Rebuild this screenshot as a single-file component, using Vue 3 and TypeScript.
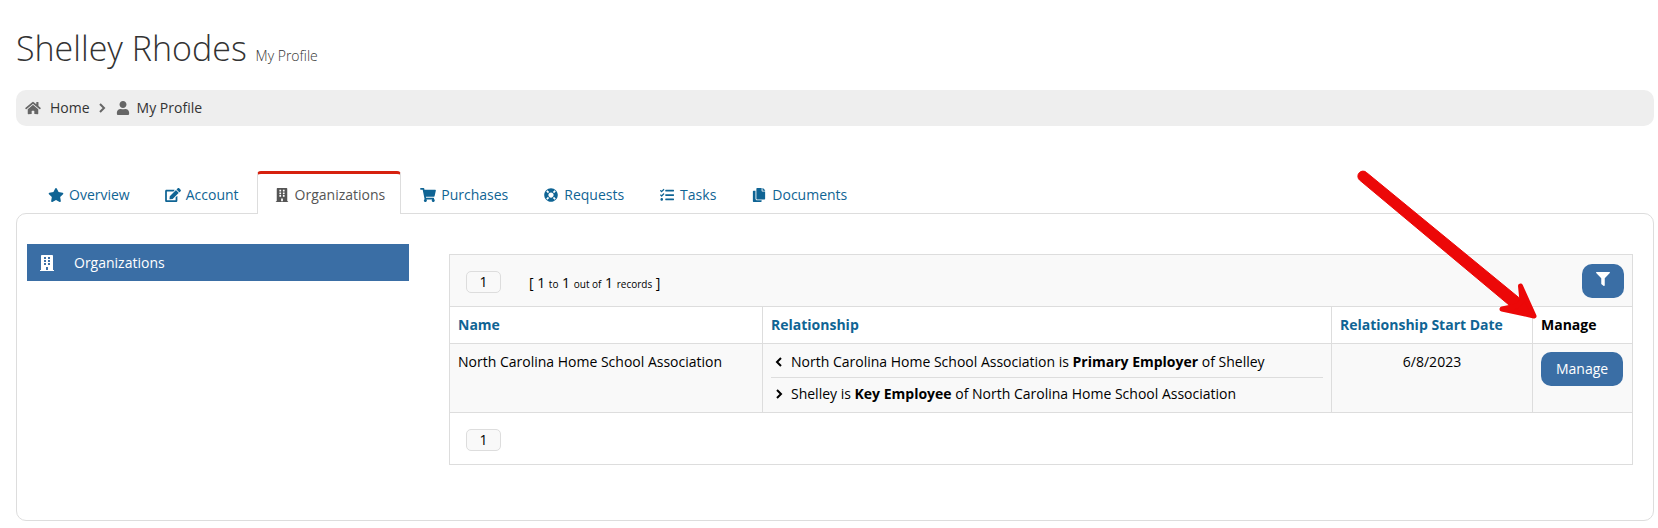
<script setup lang="ts">
import { ref } from 'vue'

interface Icon {
  viewBox: string
  path: string
}

interface Tab {
  label: string
  icon: Icon
}

const icons: Record<string, Icon> = {
  home: {
    viewBox: '0 0 576 512',
    path: 'M280.37 148.26L96 300.11V464a16 16 0 0 0 16 16l112.06-.29a16 16 0 0 0 15.92-16V368a16 16 0 0 1 16-16h64a16 16 0 0 1 16 16v95.64a16 16 0 0 0 16 16.05L464 480a16 16 0 0 0 16-16V300L295.67 148.26a12.19 12.19 0 0 0-15.3 0zM571.6 251.47L488 182.56V44.05a12 12 0 0 0-12-12h-56a12 12 0 0 0-12 12v72.61L318.47 43a48 48 0 0 0-61 0L4.34 251.47a12 12 0 0 0-1.6 16.9l25.5 31A12 12 0 0 0 45.15 301l235.22-193.74a12.19 12.19 0 0 1 15.3 0L530.9 301a12 12 0 0 0 16.9-1.6l25.5-31a12 12 0 0 0-1.7-16.93z',
  },
  user: {
    viewBox: '0 0 448 512',
    path: 'M224 256c70.7 0 128-57.3 128-128S294.7 0 224 0 96 57.3 96 128s57.3 128 128 128zm89.6 32h-16.7c-22.2 10.2-46.9 16-72.9 16s-50.6-5.8-72.9-16h-16.7C60.2 288 0 348.2 0 422.4V464c0 26.5 21.5 48 48 48h352c26.5 0 48-21.5 48-48v-41.6c0-74.2-60.2-134.4-134.4-134.4z',
  },
  star: {
    viewBox: '0 0 576 512',
    path: 'M259.3 17.8L194 150.2 47.9 171.5c-26.2 3.8-36.7 36.1-17.7 54.6l105.7 103-25 145.5c-4.5 26.3 23.2 46 46.4 33.7L288 439.6l130.7 68.7c23.2 12.2 50.9-7.4 46.4-33.7l-25-145.5 105.7-103c19-18.5 8.5-50.8-17.7-54.6L382 150.2 316.7 17.8c-11.7-23.6-45.6-23.9-57.4 0z',
  },
  edit: {
    viewBox: '0 0 576 512',
    path: 'M402.6 83.2l90.2 90.2c3.8 3.8 3.8 10 0 13.8L274.4 405.6l-92.8 10.3c-12.4 1.4-22.9-9.1-21.5-21.5l10.3-92.8L388.8 83.2c3.8-3.8 10-3.8 13.8 0zm162-22.9l-48.8-48.8c-15.2-15.2-39.9-15.2-55.2 0l-35.4 35.4c-3.8 3.8-3.8 10 0 13.8l90.2 90.2c3.8 3.8 10 3.8 13.8 0l35.4-35.4c15.2-15.3 15.2-40 0-55.2zM384 346.2V448H64V128h229.8c3.2 0 6.2-1.3 8.5-3.5l40-40c7.6-7.6 2.2-20.5-8.5-20.5H48C21.5 64 0 85.5 0 112v352c0 26.5 21.5 48 48 48h352c26.5 0 48-21.5 48-48V306.2c0-10.7-12.9-16-20.5-8.5l-40 40c-2.2 2.3-3.5 5.3-3.5 8.5z',
  },
  building: {
    viewBox: '0 0 448 512',
    path: 'M436 480h-20V24c0-13.255-10.745-24-24-24H56C42.745 0 32 10.745 32 24v456H12c-6.627 0-12 5.373-12 12v20h448v-20c0-6.627-5.373-12-12-12zM128 76c0-6.627 5.373-12 12-12h40c6.627 0 12 5.373 12 12v40c0 6.627-5.373 12-12 12h-40c-6.627 0-12-5.373-12-12V76zm0 96c0-6.627 5.373-12 12-12h40c6.627 0 12 5.373 12 12v40c0 6.627-5.373 12-12 12h-40c-6.627 0-12-5.373-12-12v-40zm52 148h-40c-6.627 0-12-5.373-12-12v-40c0-6.627 5.373-12 12-12h40c6.627 0 12 5.373 12 12v40c0 6.627-5.373 12-12 12zm76 160h-64v-84c0-6.627 5.373-12 12-12h40c6.627 0 12 5.373 12 12v84zm64-172c0 6.627-5.373 12-12 12h-40c-6.627 0-12-5.373-12-12v-40c0-6.627 5.373-12 12-12h40c6.627 0 12 5.373 12 12v40zm0-96c0 6.627-5.373 12-12 12h-40c-6.627 0-12-5.373-12-12v-40c0-6.627 5.373-12 12-12h40c6.627 0 12 5.373 12 12v40zm0-96c0 6.627-5.373 12-12 12h-40c-6.627 0-12-5.373-12-12V76c0-6.627 5.373-12 12-12h40c6.627 0 12 5.373 12 12v40z',
  },
  cart: {
    viewBox: '0 0 576 512',
    path: 'M528.12 301.319l47.273-208C578.806 78.301 567.391 64 551.99 64H159.208l-9.166-44.81C147.758 8.021 137.93 0 126.529 0H24C10.745 0 0 10.745 0 24v16c0 13.255 10.745 24 24 24h69.883l70.248 343.435C147.325 417.1 136 435.222 136 456c0 30.928 25.072 56 56 56s56-25.072 56-56c0-15.674-6.447-29.835-16.824-40h209.647C430.447 426.165 424 440.326 424 456c0 30.928 25.072 56 56 56s56-25.072 56-56c0-22.172-12.888-41.332-31.579-50.405l5.517-24.276c3.413-15.018-8.002-29.319-23.403-29.319H218.117l-6.545-32h293.145c11.206 0 20.92-7.754 23.403-18.681z',
  },
  ring: {
    viewBox: '0 0 512 512',
    path: 'M256 8C119.033 8 8 119.033 8 256s111.033 248 248 248 248-111.033 248-248S392.967 8 256 8zm173.696 119.559l-63.399 63.399c-10.987-18.559-26.67-34.252-45.255-45.255l63.399-63.399a218.396 218.396 0 0 1 45.255 45.255zM256 352c-53.019 0-96-42.981-96-96s42.981-96 96-96 96 42.981 96 96-42.981 96-96 96zM127.559 82.304l63.399 63.399c-18.559 10.987-34.252 26.67-45.255 45.255l-63.399-63.399a218.372 218.372 0 0 1 45.255-45.255zM82.304 384.441l63.399-63.399c10.987 18.559 26.67 34.252 45.255 45.255l-63.399 63.399a218.396 218.396 0 0 1-45.255-45.255zm302.137 45.255l-63.399-63.399c18.559-10.987 34.252-26.67 45.255-45.255l63.399 63.399a218.403 218.403 0 0 1-45.255 45.255z',
  },
  tasks: {
    viewBox: '0 0 512 512',
    path: 'M139.61 35.5a12 12 0 0 0-17 0L58.93 98.81l-22.7-22.12a12 12 0 0 0-17 0L3.53 92.41a12 12 0 0 0 0 17l47.59 47.4a12.78 12.78 0 0 0 17.61 0l15.59-15.62L156.52 69a12.09 12.09 0 0 0 .09-17zm0 159.19a12 12 0 0 0-17 0l-63.68 63.72-22.7-22.1a12 12 0 0 0-17 0L3.53 252a12 12 0 0 0 0 17L51 316.5a12.77 12.77 0 0 0 17.6 0l15.7-15.69 72.2-72.22a12 12 0 0 0 .09-16.9zM64 368c-26.49 0-48.59 21.5-48.59 48S37.53 464 64 464a48 48 0 0 0 0-96zm432 16H208a16 16 0 0 0-16 16v32a16 16 0 0 0 16 16h288a16 16 0 0 0 16-16v-32a16 16 0 0 0-16-16zm0-320H208a16 16 0 0 0-16 16v32a16 16 0 0 0 16 16h288a16 16 0 0 0 16-16V80a16 16 0 0 0-16-16zm0 160H208a16 16 0 0 0-16 16v32a16 16 0 0 0 16 16h288a16 16 0 0 0 16-16v-32a16 16 0 0 0-16-16z',
  },
  copy: {
    viewBox: '0 0 448 512',
    path: 'M320 448v40c0 13.255-10.745 24-24 24H24c-13.255 0-24-10.745-24-24V120c0-13.255 10.745-24 24-24h72v296c0 30.879 25.121 56 56 56h168zm0-344V0H152c-13.255 0-24 10.745-24 24v368c0 13.255 10.745 24 24 24h272c13.255 0 24-10.745 24-24V128H344c-13.2 0-24-10.8-24-24zm120.971-31.029L375.029 7.029A24 24 0 0 0 358.059 0H352v96h96v-6.059a24 24 0 0 0-7.029-16.97z',
  },
  filter: {
    viewBox: '0 0 512 512',
    path: 'M487.976 0H24.028C2.71 0-8.047 25.866 7.058 40.971L192 225.941V432c0 7.831 3.821 15.17 10.237 19.662l80 55.98C298.02 518.69 320 507.493 320 487.98V225.941l184.947-184.97C520.021 25.896 509.338 0 487.976 0z',
  },
}

const tabs: Tab[] = [
  { label: 'Overview', icon: icons.star },
  { label: 'Account', icon: icons.edit },
  { label: 'Organizations', icon: icons.building },
  { label: 'Purchases', icon: icons.cart },
  { label: 'Requests', icon: icons.ring },
  { label: 'Tasks', icon: icons.tasks },
  { label: 'Documents', icon: icons.copy },
]

const active = ref('Organizations')
</script>

<template>
  <div class="page">
    <h1 class="title">Shelley Rhodes <small>My Profile</small></h1>

    <nav class="breadcrumb" aria-label="Breadcrumb">
      <a href="#home"><svg class="icon" :viewBox="icons.home.viewBox"><path :d="icons.home.path" /></svg>Home</a>
      <svg class="chevron" viewBox="0 0 8 10"><path d="M2 1l4 4-4 4" /></svg>
      <a href="#profile" class="profile"><svg class="icon" :viewBox="icons.user.viewBox"><path :d="icons.user.path" /></svg>My Profile</a>
    </nav>

    <nav class="tabs" aria-label="Profile sections">
      <a
        v-for="tab in tabs"
        :key="tab.label"
        :href="'#' + tab.label.toLowerCase()"
        :class="['tab', { active: tab.label === active }]"
        @click.prevent="active = tab.label"
      ><svg class="icon" :viewBox="tab.icon.viewBox"><path :d="tab.icon.path" /></svg>{{ tab.label }}</a>
    </nav>

    <main class="panel">
      <aside>
        <a href="#organizations" class="side-link"><svg class="icon" :viewBox="icons.building.viewBox"><path :d="icons.building.path" /></svg>Organizations</a>
      </aside>

      <section class="grid">
        <div class="bar shaded">
          <button type="button" class="page-number">1</button>
          <span class="records">[ 1 <small>to</small> 1 <small>out of</small> 1 <small>records</small> ]</span>
          <button type="button" class="primary filter" aria-label="Filter">
            <svg class="icon" :viewBox="icons.filter.viewBox"><path :d="icons.filter.path" /></svg>
          </button>
        </div>
        <table>
          <colgroup>
            <col class="col-name" />
            <col />
            <col class="col-date" />
            <col class="col-manage" />
          </colgroup>
          <thead>
            <tr>
              <th><a href="#name">Name</a></th>
              <th><a href="#relationship">Relationship</a></th>
              <th><a href="#start">Relationship Start Date</a></th>
              <th>Manage</th>
            </tr>
          </thead>
          <tbody>
            <tr>
              <td>North Carolina Home School Association</td>
              <td>
                <div class="relation">
                  <svg class="chevron" viewBox="0 0 8 10"><path d="M6 1l-4 4 4 4" /></svg>
                  <span>North Carolina Home School Association is <b>Primary Employer</b> of Shelley</span>
                </div>
                <div class="relation">
                  <svg class="chevron" viewBox="0 0 8 10"><path d="M2 1l4 4-4 4" /></svg>
                  <span>Shelley is <b>Key Employee</b> of North Carolina Home School Association</span>
                </div>
              </td>
              <td class="date">6/8/2023</td>
              <td><button type="button" class="primary">Manage</button></td>
            </tr>
          </tbody>
        </table>
        <div class="bar footer">
          <button type="button" class="page-number">1</button>
        </div>
      </section>
    </main>

    <svg class="arrow" viewBox="0 0 184 152" aria-hidden="true">
      <path d="M11.5 5.5L168 134L160 143L4.500 13A5 5 0 0 1 11.500 5.500Z" stroke-width="1" />
      <path d="M165.500 119L179 149L147 142L162 139L167 134Z" stroke-width="5" />
    </svg>
  </div>
</template>

<style>
body {
  margin: 0;
  background: #fff;
}
</style>

<style scoped>
.page {
  position: relative;
  padding: 24px 4px 7px 16px;
  color: #000;
  font: 14px/20px "Open Sans", "Noto Sans", sans-serif;
}

.page *,
.page {
  box-sizing: border-box;
}

a {
  color: #0f6494;
  text-decoration: none;
}

button {
  font: inherit;
  cursor: pointer;
}

.icon {
  flex: none;
  width: 18px;
  height: 14px;
  fill: currentColor;
}

.chevron {
  flex: none;
  width: 8px;
  height: 10px;
  fill: none;
  stroke: currentColor;
  stroke-width: 2;
}

.title {
  margin: 0 0 18px;
  color: #333;
  font-size: 34px;
  font-weight: 300;
  line-height: 48px;
}

.title small {
  font-size: 14px;
  line-height: 20px;
}

.breadcrumb {
  display: flex;
  align-items: center;
  height: 36px;
  padding: 0 8px;
  border-radius: 10px;
  background: #eee;
}

.breadcrumb a {
  display: flex;
  align-items: center;
  gap: 8px;
  color: #333;
}

.breadcrumb .profile {
  gap: 5px;
}

.breadcrumb .icon,
.breadcrumb .chevron {
  color: #666;
}

.breadcrumb .chevron {
  margin: 0 8px;
}

.tabs {
  display: flex;
  gap: 2px;
  margin-top: 45px;
  padding-left: 15px;
}

.tab {
  display: flex;
  align-items: center;
  gap: 4px;
  height: 43px;
  margin-bottom: -1px;
  padding: 1px 15px 0;
  border: 1px solid transparent;
  border-top-width: 3px;
  border-bottom: 0;
  border-radius: 4px 4px 0 0;
}

.tab.active {
  z-index: 1;
  border-color: #d6210f #ddd #ddd;
  background: #fff;
  color: #555;
}

.panel {
  display: grid;
  grid-template-columns: minmax(0, 382fr) minmax(0, 1184fr);
  gap: 40px;
  padding: 30px 20px 55px 10px;
  border: 1px solid #ddd;
  border-radius: 10px;
}

.side-link {
  display: flex;
  align-items: center;
  gap: 18px;
  height: 37px;
  padding: 0 11px;
  background: #3a6ea5;
  color: #fff;
}

.side-link .icon {
  height: 16px;
}

.grid {
  margin-top: 10px;
  border: 1px solid #ddd;
}

.bar {
  display: flex;
  align-items: center;
  height: 51px;
  padding: 0 8px 0 16px;
}

.shaded {
  background: #f9f9f9;
}

.footer {
  height: 52px;
  border-top: 1px solid #ddd;
}

.page-number {
  width: 35px;
  height: 22px;
  margin-top: 3px;
  padding: 0;
  border: 1px solid #ddd;
  border-radius: 5px;
  background: #f9f9f9;
  color: #000;
  line-height: 20px;
}

.records {
  margin: 5px 0 0 28px;
}

.records small {
  font-size: 10px;
}

.primary {
  height: 34px;
  padding: 0 15px;
  border: 0;
  border-radius: 10px;
  background: #3a6ea5;
  color: #fff;
}

.filter {
  width: 42px;
  margin-left: auto;
  padding: 0 12px;
}

table {
  width: 100%;
  border-collapse: separate;
  border-spacing: 0;
  table-layout: fixed;
}

.col-name {
  width: 312px;
}

.col-date {
  width: 201px;
}

.col-manage {
  width: 100px;
}

th,
td {
  padding: 8px;
  border-top: 1px solid #ddd;
  text-align: left;
  vertical-align: top;
}

th + th,
td + td {
  border-left: 1px solid #ddd;
}

th {
  font-weight: 700;
}

tbody tr {
  background: #f9f9f9;
}

td {
  height: 69px;
}

td.date {
  text-align: center;
}

.relation {
  display: flex;
  align-items: center;
  gap: 8px;
  padding-left: 4px;
}

.relation + .relation {
  margin-top: 5px;
  padding-top: 6px;
  border-top: 1px solid #ddd;
}

.arrow {
  position: absolute;
  z-index: 2;
  top: 167px;
  right: 119px;
  width: 184px;
  height: 152px;
  fill: #ec0808;
  stroke: #ec0808;
  stroke-linejoin: round;
  pointer-events: none;
}
</style>
